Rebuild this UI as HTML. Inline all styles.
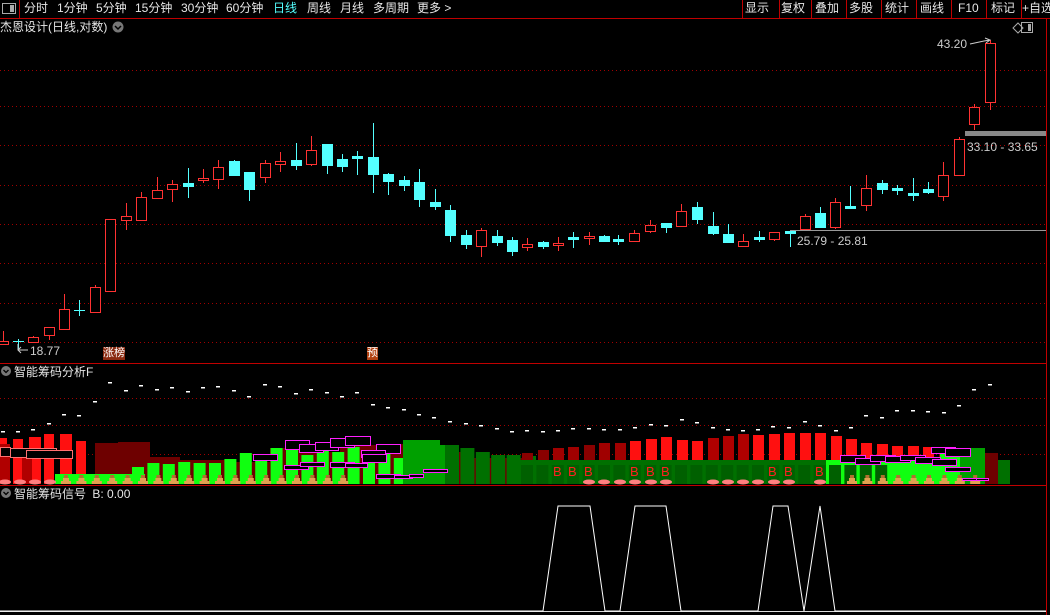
<!DOCTYPE html>
<html><head><meta charset="utf-8">
<style>
html,body{margin:0;padding:0;background:#000;width:1050px;height:615px;overflow:hidden;font-family:"Liberation Sans","Noto Sans CJK SC",sans-serif;}
.t{position:absolute;font-size:12px;color:#e6e6e6;white-space:nowrap;line-height:14px;}
#svg{position:absolute;left:0;top:0;}
</style></head><body>
<svg id="svg" width="1050" height="615" xmlns="http://www.w3.org/2000/svg">
<g id="g"></g>
</svg>
<div class="t" style="left:24px;top:1px">分时</div>
<div class="t" style="left:57px;top:1px">1分钟</div>
<div class="t" style="left:96px;top:1px">5分钟</div>
<div class="t" style="left:135px;top:1px">15分钟</div>
<div class="t" style="left:181px;top:1px">30分钟</div>
<div class="t" style="left:226px;top:1px">60分钟</div>
<div class="t" style="left:273px;top:1px;color:#54ffff">日线</div>
<div class="t" style="left:307px;top:1px">周线</div>
<div class="t" style="left:340px;top:1px">月线</div>
<div class="t" style="left:373px;top:1px">多周期</div>
<div class="t" style="left:417px;top:1px">更多 &gt;</div>
<div class="t" style="left:745px;top:1px">显示</div>
<div class="t" style="left:781px;top:1px">复权</div>
<div class="t" style="left:815px;top:1px">叠加</div>
<div class="t" style="left:849px;top:1px">多股</div>
<div class="t" style="left:885px;top:1px">统计</div>
<div class="t" style="left:920px;top:1px">画线</div>
<div class="t" style="left:958px;top:1px">F10</div>
<div class="t" style="left:991px;top:1px">标记</div>
<div class="t" style="left:1022px;top:1px">+自选</div>
<div class="t" style="left:0px;top:20px">杰恩设计(日线,对数)</div>
<div class="t" style="left:937px;top:37px;color:#ccc">43.20</div>
<div class="t" style="left:967px;top:140px;color:#ccc">33.10 - 33.65</div>
<div class="t" style="left:797px;top:234px;color:#ccc">25.79 - 25.81</div>
<div class="t" style="left:30px;top:344px;color:#ccc">18.77</div>
<div class="t" style="left:103px;top:347px;font-size:11px;background:#8a2a10;color:#fff;line-height:13px">涨榜</div>
<div class="t" style="left:367px;top:347px;font-size:11px;background:#b04010;color:#fff;line-height:13px">预</div>
<div class="t" style="left:14px;top:365px">智能筹码分析F</div>
<div class="t" style="left:14px;top:487px">智能筹码信号 <span style="margin-left:3px">B: 0.00</span></div>
<script>
var g=document.getElementById('g'),s='';
function R(x,y,w,h,f,st){s+='<rect x="'+x+'" y="'+y+'" width="'+w+'" height="'+h+'" fill="'+(f||'none')+'"'+(st?' stroke="'+st+'"':'')+'/>';}
function L(x1,y1,x2,y2,c,extra){s+='<line x1="'+x1+'" y1="'+y1+'" x2="'+x2+'" y2="'+y2+'" stroke="'+c+'"'+(extra||'')+'/>';}
// frame lines
L(0,18.5,1050,18.5,'#c00000');L(19.5,0,19.5,18,'#c00000');
[742,779,811,846,881,916,951,986,1021].forEach(function(x){L(x+.5,0,x+.5,18,'#c00000');});
L(1046.5,18,1046.5,615,'#c00000');
L(0,363.5,1046,363.5,'#c00000');L(0,485.5,1046,485.5,'#c00000');
[70,106,145,185,224,263,303,342].forEach(function(y){L(0,y+.5,1046,y+.5,'#a00000',' stroke-dasharray="1,3"');});
[398,425,454].forEach(function(y){L(0,y+.5,1046,y+.5,'#a00000',' stroke-dasharray="1,3"');});
// toolbar icon
R(2.5,3.5,13,10,'none','#aaa');R(10,5,4,7,'#aaa');
R(1021.5,22.5,11,10,'none','#aaa');R(1028,24,3,7,'#aaa');
s+='<path d="M1018 23 L1023 28 L1018 33 L1013 28 Z" fill="none" stroke="#aaa"/>';
s+='<circle cx="118" cy="27" r="5.5" fill="#777"/><path d="M115 26 L118 29 L121 26" stroke="#000" stroke-width="1.5" fill="none"/>';
s+='<circle cx="6" cy="371" r="5" fill="#777"/><path d="M3.5 370 L6 372.5 L8.5 370" stroke="#000" stroke-width="1.3" fill="none"/>';
s+='<circle cx="6" cy="493" r="5" fill="#777"/><path d="M3.5 492 L6 494.5 L8.5 492" stroke="#000" stroke-width="1.3" fill="none"/>';
// candles [x,high,top,bottom,low,c]
var C=[[3,331,341,344,344,'r'],[18,339,341,341,349,'c'],[33,336,337,342,342,'r'],[49,327,327,335,340,'r'],[64,294,309,329,329,'r'],[79,300,310,310,316,'c'],[95,285,287,312,312,'r'],[110,219,219,291,291,'r'],[126,203,216,220,230,'r'],[141,192,197,220,220,'r'],[157,177,190,198,198,'r'],[172,180,184,189,202,'r'],[188,168,183,186,198,'c'],[203,169,178,180,183,'r'],[218,160,167,179,189,'r'],[234,160,161,175,176,'c'],[249,172,172,189,201,'c'],[265,160,163,177,183,'r'],[280,152,161,164,172,'r'],[296,143,160,165,170,'c'],[311,136,150,164,166,'r'],[327,144,144,165,174,'c'],[342,154,159,166,172,'c'],[357,151,156,158,175,'c'],[373,123,157,174,193,'c'],[388,173,174,181,195,'c'],[404,176,180,185,191,'c'],[419,169,182,199,207,'c'],[435,189,202,206,210,'c'],[450,205,210,235,242,'c'],[466,230,235,244,249,'c'],[481,228,230,246,257,'r'],[497,230,236,242,246,'c'],[512,237,240,251,256,'c'],[527,238,244,247,251,'r'],[543,241,242,246,249,'c'],[558,237,243,245,251,'r'],[573,232,237,239,248,'c'],[589,232,236,238,245,'r'],[604,235,236,241,242,'c'],[618,235,239,241,245,'c'],[634,230,233,241,241,'r'],[650,220,225,231,233,'r'],[666,223,223,227,233,'c'],[681,204,211,226,226,'r'],[697,202,207,219,224,'c'],[713,212,226,233,235,'c'],[728,224,234,242,242,'c'],[743,234,241,246,246,'r'],[759,231,237,239,242,'c'],[774,232,232,239,241,'r'],[790,231,231,233,247,'c'],[805,214,216,229,229,'r'],[820,207,213,227,227,'c'],[835,198,202,227,229,'r'],[850,186,206,208,208,'c'],[866,175,188,205,211,'r'],[882,180,183,189,194,'c'],[897,185,188,190,195,'c'],[913,178,193,195,201,'c'],[928,182,189,192,194,'c'],[943,162,175,196,201,'r'],[959,137,139,175,175,'r'],[974,104,107,124,130,'r'],[990,40,43,102,110,'r']];
L(790,230.5,1046,230.5,'#999');
R(965,131,81,5,'#888');
C.forEach(function(c){var x=c[0],col=c[5]=='r'?'#ff3232':'#54ffff';
 L(x+.5,c[1],x+.5,c[4],col);
 if(c[3]-c[2]<1){L(x-5,c[2]+.5,x+6,c[2]+.5,col);}
 else if(c[5]=='r')R(x-5+.5,c[2]+.5,10,c[3]-c[2],'#000',col);
 else R(x-5,c[2],11,c[3]-c[2]+1,col);
});
// arrows labels
s+='<path d="M970 44 L984 41 L990 40 M985 38 L990 40 L986 43" stroke="#ccc" fill="none"/>';
s+='<path d="M28 350 L18 350 M21 347 L18 350 L21 353 M18 344 L18 350" stroke="#ccc" fill="none"/>';
// panel1 bars
var base=484;
function B(x,w,top,col){R(x,top,w,base-top,col);}
// dark red background
[[95,25,443],[118,32,442],[150,30,457],[180,50,460],[230,40,462],[270,30,448],[300,40,452],[340,40,445],[380,60,444],[440,30,452],[470,55,458]].forEach(function(b){B(b[0],b[1],b[2],'#6e0000');});
// bright red left
[[0,7,438],[13,10,439],[29,12,437],[44,10,434],[60,12,434],[76,10,441]].forEach(function(b){B(b[0],b[1],b[2],'#ff1010');});
R(0,444,10,40,'#b00000');R(22,448,10,36,'#b00000');
// red highlighted boxes left
R(0.5,447.5,10,9,'#000','#ff7070');R(10.5,448.5,46,9,'#000','#ff7070');R(26.5,450.5,46,8,'#000','#ff7070');
// green left region
for(var i=0;i<20;i++){var x=137+i*15.4;B(x-5,12,[467,463,464,462,463,463,459,453,459,448,450,455,451,452,447,455,452,458,460,462][i],'#10ff10');}
B(55,90,474,'#10ff10');
B(403,37,440,'#00a000');B(440,10,445,'#00a000');
// middle dark green
for(var i=0;i<6;i++){B(445+i*15.4,14,[445,448,452,455,455,456][i],'#007000');}
B(520,490,460,'#007000');
// red bars right
var rt=[[527,453,'#8a0000'],[543,450,'#8a0000'],[558,448,'#a00000'],[573,447,'#a00000'],[589,445,'#8a0000'],[604,443,'#a00000'],[620,443,'#a00000'],[635,441,'#ff1010'],[651,439,'#ff1010'],[666,437,'#ff1010'],[682,440,'#ff1010'],[697,441,'#ff1010'],[713,438,'#b00000'],[728,436,'#b00000'],[743,434,'#b00000'],[758,435,'#ff1010'],[774,434,'#ff1010'],[789,433,'#ff1010'],[805,433,'#ff1010'],[820,433,'#ff1010'],[836,436,'#ff1010'],[851,439,'#ff1010'],[866,443,'#ff1010'],[882,444,'#ff1010'],[897,446,'#ff1010'],[913,446,'#ff1010'],[928,447,'#ff1010'],[944,450,'#8a0000'],[990,453,'#8a0000']];
rt.forEach(function(b){R(b[0]-5,b[1],11,460-b[1],b[2]);});
R(985,453,13,31,'#6e0000');
B(826,150,460,'#10ff10');B(940,40,450,'#10ff10');B(960,25,448,'#00a000');
// dark green base details
for(var i=0;i<24;i++){var x=527+i*15.4;R(x-6,465,12,19,'#006000');}
// B letters
[558,573,589,635,651,666,773,789,820].forEach(function(x){s+='<text x="'+(x-5)+'" y="476" font-family="Liberation Sans" font-size="13" fill="#ff2020">B</text>';});
// pink ellipses
[5,20,35,50,589,604,620,635,651,666,713,728,743,758,774,789,820].forEach(function(x){s+='<ellipse cx="'+x+'" cy="482" rx="6" ry="2.5" fill="#ff8080"/>';});
// tan figures
function F(x){R(x-2,475,4,4,'#b07030');R(x-3,478,6,5,'#e0a050');R(x-5,481,10,3,'#e0a050');}
for(var i=0;i<19;i++)F(66+i*15.4);
for(var i=0;i<9;i++)F(852+i*15.4);
// magenta boxes
[[285,440,24,9],[299,444,24,8],[315,442,23,8],[330,438,24,9],[345,436,25,9],[253,454,24,6],[376,444,24,9],[361,450,24,7],[362,454,24,8],[284,465,24,4],[300,462,24,4],[330,462,24,5],[345,463,22,4],[376,474,24,4],[394,475,18,3],[409,474,14,3],[423,469,24,3],[840,455,25,7],[855,458,25,6],[870,455,25,6],[885,456,25,6],[900,455,25,5],[915,457,25,6],[931,447,24,6],[945,448,25,8],[932,459,24,6],[945,467,25,4],[962,478,14,2],[976,478,12,2]].forEach(function(b){R(b[0]+.5,b[1]+.5,b[2],b[3],'#000','#ff20ff');});
// white dashes
var D=[[3,431],[18,431],[33,429],[49,423],[64,414],[79,415],[95,401],[110,382],[126,390],[141,385],[157,389],[172,387],[188,391],[203,387],[218,386],[234,390],[249,396],[265,384],[280,386],[296,393],[311,389],[327,392],[342,396],[357,392],[373,404],[388,407],[404,409],[419,414],[434,417],[450,421],[466,423],[481,425],[497,428],[512,431],[527,430],[543,431],[558,430],[573,428],[589,428],[604,429],[620,429],[635,427],[651,424],[666,425],[682,419],[697,422],[713,427],[728,429],[743,430],[758,429],[773,426],[789,427],[805,421],[820,425],[836,430],[851,427],[866,415],[882,417],[897,410],[913,410],[928,411],[944,412],[959,405],[974,389],[990,384]];
D.forEach(function(d){R(d[0]-2,d[1],4,1.5,'#fff');});
// panel2 signal
L(0,611.5,1046,611.5,'#ddd');
s+='<polyline fill="none" stroke="#fff" points="0,611 543,611 558,506 590,506 605,611 620,611 635,506 666,506 681,611 758,611 773,506 788,506 804,611 820,506 835,611 1046,611"/>';
g.innerHTML=s;
</script>
</body></html>
